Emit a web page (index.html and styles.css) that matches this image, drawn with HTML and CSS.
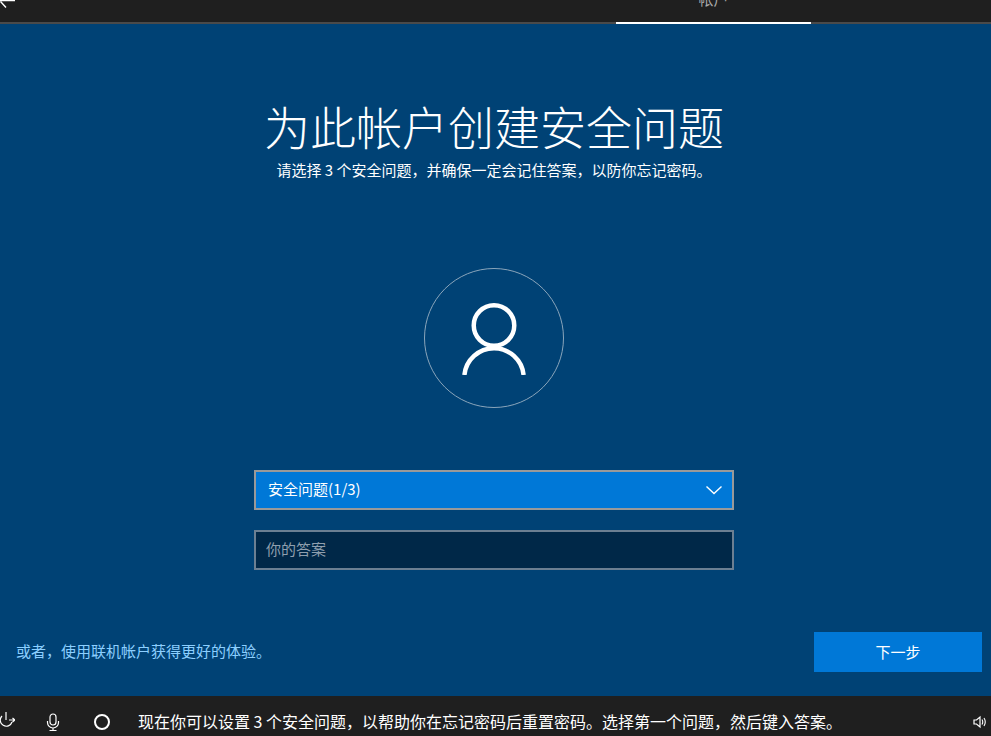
FILE: index.html
```html
<!DOCTYPE html>
<html lang="zh-CN">
<head>
<meta charset="utf-8">
<title>为此帐户创建安全问题</title>
<link rel="stylesheet" href="styles.css">
</head>
<body>
<div class="screen">
  <header class="topbar">
    <svg class="back" width="18" height="10" viewBox="0 0 18 10" aria-hidden="true"><path d="M0 0.5H15M0.5 1.500L6 7.500" fill="none" stroke="#fff" stroke-width="1.400"/></svg>
    <div class="tab"><span class="tab-label">帐户</span></div>
  </header>
  <main class="main">
    <h1 class="title">为此帐户创建安全问题</h1>
    <p class="subtitle">请选择 3 个安全问题，并确保一定会记住答案，以防你忘记密码。</p>
    <div class="avatar">
      <svg width="66" height="74" viewBox="0 0 66 74" aria-hidden="true"><circle cx="33" cy="24.500" r="20.250" fill="none" stroke="#fff" stroke-width="4.500"/><path d="M3.400 74A29.750 29.750 0 0 1 62.600 74" fill="none" stroke="#fff" stroke-width="4.500"/></svg>
    </div>
    <div class="form">
      <div class="select">
        <span>安全问题(1/3)</span>
        <svg width="18" height="10" viewBox="0 0 18 10" aria-hidden="true"><path d="M1.500 1.500L9 8.500L16.500 1.500" fill="none" stroke="#fff" stroke-width="1.400"/></svg>
      </div>
      <div class="input">你的答案</div>
    </div>
    <div class="actions">
      <a class="link">或者，使用联机帐户获得更好的体验。</a>
      <button class="next">下一步</button>
    </div>
  </main>
  <footer class="footer">
    <svg class="ease" width="15" height="16" viewBox="0 0 15 16" aria-hidden="true"><path d="M6 0V8M2 4A6 6 0 1 0 12 10M9 8H15M12.500 6L15 8L12.500 10" fill="none" stroke="#fff" stroke-width="1.200"/></svg>
    <svg class="mic" width="14" height="18" viewBox="0 0 14 18" aria-hidden="true"><rect x="4" y="1" width="6" height="11" rx="3" fill="none" stroke="#fff" stroke-width="1.200"/><path d="M1.500 8V9.500A5.500 5.500 0 0 0 12.500 9.500V8M7 15V17M3.500 17.500H10.500" fill="none" stroke="#fff" stroke-width="1.200"/></svg>
    <span class="ring"></span>
    <span class="caption">现在你可以设置 3 个安全问题，以帮助你在忘记密码后重置密码。选择第一个问题，然后键入答案。</span>
    <svg class="vol" width="14" height="14" viewBox="0 0 14 14" aria-hidden="true"><path d="M1 5V9H3.500L7 12V2L3.500 5Z" fill="none" stroke="#fff" stroke-width="1.200"/><path d="M9 4.500Q10.500 7 9 9.500M11 3Q13.500 7 11 11" fill="none" stroke="#fff" stroke-width="1.100"/></svg>
  </footer>
</div>
</body>
</html>
```
FILE: styles.css
```css
* { box-sizing: border-box; }
html, body { margin: 0; padding: 0; }
body {
  width: 991px;
  height: 736px;
  overflow: hidden;
  font-family: "Noto Sans CJK SC", "Liberation Sans", sans-serif;
  color: #fff;
  background: #004275;
}
.screen { display: flex; flex-direction: column; height: 736px; }
.topbar {
  position: relative;
  flex: 0 0 24px;
  height: 24px;
  display: flex;
  background: #1f1f1f;
  border-bottom: 2px solid #4a4a4a;
}
.back { position: absolute; left: 0; top: 0; }
.tab {
  flex: 0 0 195px;
  height: 24px;
  margin: 0 0 -2px 616px;
  border-bottom: 2px solid #fff;
  text-align: center;
  overflow: hidden;
}
.tab-label {
  display: block;
  margin-top: -11px;
  font-size: 15px;
  line-height: 20px;
  color: #a9a9a9;
}
.main { flex: 1; display: flex; flex-direction: column; align-items: center; padding: 70px 3px 0 0; }
.title { margin: 0; font-size: 46px; line-height: 62px; font-weight: 300; }
.subtitle { margin: 4px 0 0; font-size: 15px; line-height: 20px; }
.avatar {
  width: 140px;
  height: 140px;
  margin-top: 88px;
  border: 1px solid #8aa5bb;
  border-radius: 50%;
  display: flex;
  align-items: center;
  justify-content: center;
}
.form { width: 480px; margin-top: 62px; display: flex; flex-direction: column; gap: 20px; }
.select, .input { height: 40px; display: flex; align-items: center; font-size: 15px; border-style: solid; border-width: 2px; }
.select { justify-content: space-between; padding: 0 9px 3px 12px; background: #0078d7; border-color: #999; }
.select svg { margin-top: 3px; }
.input { padding: 0 10px 3px; background: #002848; border-color: #6b7f92; color: #8f9fae; }
.actions { align-self: flex-start; width: 991px; margin-top: 62px; display: flex; align-items: center; justify-content: space-between; padding: 0 9px 0 16px; }
.link { font-size: 15px; line-height: 20px; color: #8ccfff; position: relative; top: -1px; }
.next {
  width: 168px;
  height: 40px;
  border: 0;
  padding: 0 0 2px;
  background: #0078d7;
  color: #fff;
  font: inherit;
  font-size: 15px;
}
.footer { position: relative; flex: 0 0 40px; display: flex; align-items: center; padding-top: 12px; background: #1f1f1f; }
.ease { margin-top: -4px; }
.mic { margin-left: 31px; }
.ring { width: 16px; height: 16px; margin-left: 34px; border: 2px solid #fff; border-radius: 50%; }
.caption { margin-left: 28px; font-size: 16px; line-height: 20px; white-space: nowrap; flex: 1; position: relative; top: -1px; }
.vol { margin-right: 4px; }
```
